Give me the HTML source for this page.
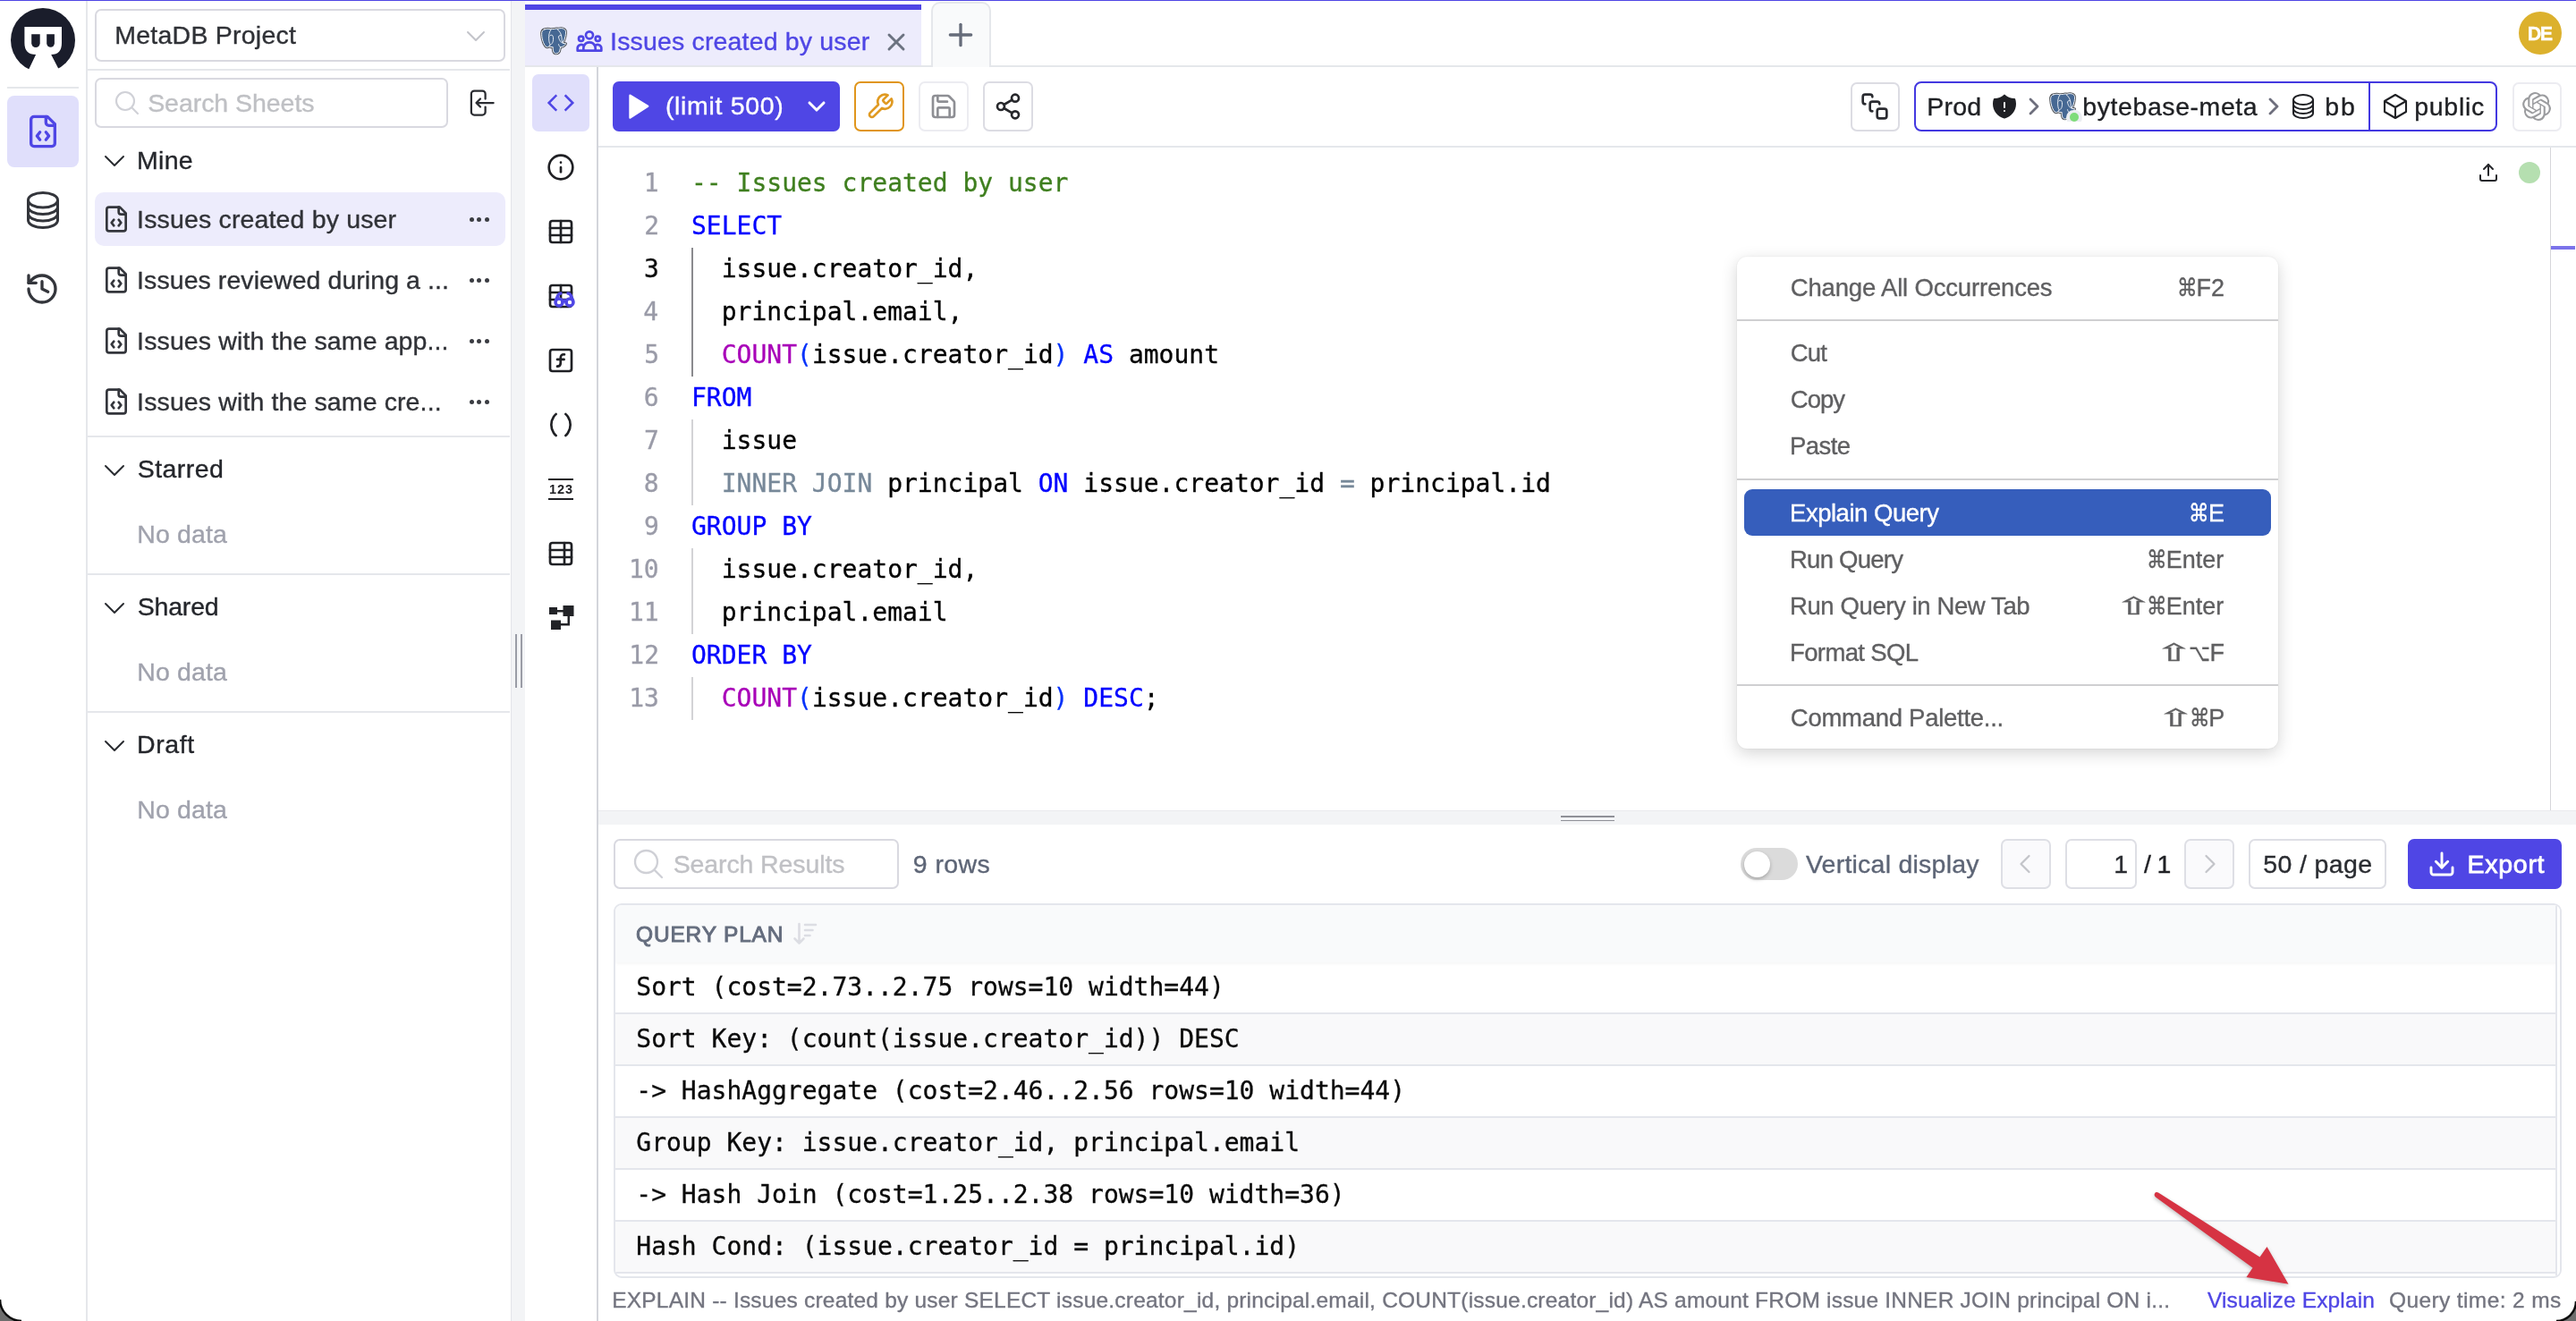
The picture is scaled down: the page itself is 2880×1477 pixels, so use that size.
<!DOCTYPE html>
<html lang="en">
<head>
<meta charset="utf-8">
<title>Bytebase SQL Editor - Issues created by user</title>
<style>
html,body{margin:0;padding:0;background:#fff;}
body{width:2880px;height:1477px;overflow:hidden;font-family:"Liberation Sans",sans-serif;}
#app{position:relative;width:2880px;height:1477px;overflow:hidden;will-change:transform;}
.b{position:absolute;box-sizing:border-box;}
.i{position:absolute;display:block;overflow:visible;}
.t{position:absolute;white-space:pre;font-family:"Liberation Sans","DejaVu Sans",sans-serif;-webkit-text-stroke:.35px;}
.m{font-family:"DejaVu Sans Mono","Liberation Mono",monospace;-webkit-text-stroke:.3px;}
.d{font-family:"DejaVu Sans","Liberation Sans",sans-serif;}
</style>
</head>
<body>
<div id="app">
<div class="b" style="left:0px;top:0px;width:2880px;height:1px;background:#4f46e5;"></div>
<nav aria-label="Primary">
<div class="b" style="left:96px;top:1px;width:2px;height:1476px;background:#e5e7eb;"></div>
<svg class="i" style="left:12px;top:9px" width="72" height="72" viewBox="0 0 72 72">
<circle cx="36" cy="36" r="36" fill="#1a1d2b"/>
<path d="M15.400 21H57V39Q57 52 45.200 52L54.500 70V74H19.500V70L28.100 52Q15.400 52 15.400 39Z" fill="#fff"/>
<path d="M23.200 29.200H32.700V39.300a4.750 4.750 0 0 1-9.500 0Z" fill="#1a1d2b"/>
<path d="M40.200 29.200H48.900V39.300a4.350 4.350 0 0 1-8.700 0Z" fill="#1a1d2b"/>
</svg>
<div class="b" style="left:8px;top:97px;width:80px;height:2px;background:#e5e7eb;"></div>
<div class="b" style="left:8px;top:107px;width:80px;height:80px;background:#e0dffb;border-radius:8px;"></div>
<svg class="i" style="left:28px;top:127px" width="40" height="40" viewBox="0 0 24 24" fill="none" stroke="#4f46e5" stroke-width="2" stroke-linecap="round" stroke-linejoin="round" ><path d="M10 12.5 8 15l2 2.5"/><path d="m14 12.5 2 2.5-2 2.5"/><path d="M14 2v4a2 2 0 0 0 2 2h4"/><path d="M15 2H6a2 2 0 0 0-2 2v16a2 2 0 0 0 2 2h12a2 2 0 0 0 2-2V7z"/></svg>
<svg class="i" style="left:24px;top:211px" width="48" height="48" viewBox="0 0 24 24" fill="none" stroke="#33353b" stroke-width="1.5" stroke-linecap="round" stroke-linejoin="round" ><path d="M20.250 6.375c0 2.278-3.694 4.125-8.250 4.125S3.750 8.653 3.750 6.375m16.500 0c0-2.278-3.694-4.125-8.250-4.125S3.750 4.097 3.750 6.375m16.500 0v11.250c0 2.278-3.694 4.125-8.250 4.125s-8.250-1.847-8.250-4.125V6.375m16.500 0v3.750m-16.500-3.750v3.750m16.500 0v3.750C20.250 16.153 16.556 18 12 18s-8.250-1.847-8.250-4.125v-3.750m16.500 0c0 2.278-3.694 4.125-8.250 4.125s-8.250-1.847-8.250-4.125"/></svg>
<svg class="i" style="left:27px;top:303px" width="40" height="40" viewBox="0 0 24 24" fill="none" stroke="#33353b" stroke-width="2" stroke-linecap="round" stroke-linejoin="round" ><path d="M3 12a9 9 0 1 0 9-9 9.75 9.75 0 0 0-6.74 2.74L3 8"/><path d="M3 3v5h5"/><path d="M12 7v5l4 2"/></svg>
</nav>
<aside aria-label="Sheets">
<div class="b" style="left:570.5px;top:1px;width:1.5px;height:1476px;background:#e3e4e9;"></div>
<div class="b" style="left:572px;top:1px;width:15px;height:1476px;background:#f3f4f6;"></div>
<div class="b" style="left:576px;top:709px;width:2px;height:60px;background:#9a9ca6;"></div>
<div class="b" style="left:582px;top:709px;width:2px;height:60px;background:#9a9ca6;"></div>
<div class="b" style="left:106px;top:9.5px;width:459px;height:59px;border:2px solid #d9d9e0;border-radius:7px;"></div>
<span class="t" style="left:128.30px;top:20.62px;font-size:28.5px;line-height:37px;letter-spacing:0.233px;color:#2f3136;">MetaDB Project</span>
<svg class="i" style="left:516px;top:23.500px" width="32" height="32" viewBox="0 0 16 16" fill="#c3c4ca"><path d="M3.146 5.646C3.342 5.451 3.658 5.451 3.854 5.646L8 9.793L12.146 5.646C12.342 5.451 12.658 5.451 12.854 5.646C13.049 5.842 13.049 6.158 12.854 6.354L8.354 10.854C8.158 11.049 7.842 11.049 7.646 10.854L3.146 6.354C2.951 6.158 2.951 5.842 3.146 5.646Z"/></svg>
<div class="b" style="left:98px;top:77px;width:472px;height:2px;background:#e5e7eb;"></div>
<div class="b" style="left:106px;top:87px;width:394.5px;height:55.5px;border:2px solid #d9d9e0;border-radius:7px;"></div>
<svg class="i" style="left:125.5px;top:99px" width="32" height="32" viewBox="0 0 24 24" fill="none" stroke="#d0d1d7" stroke-width="1.6" stroke-linecap="round" stroke-linejoin="round" ><path d="M21 21l-5.197-5.197m0 0A7.500 7.500 0 105.196 5.196a7.500 7.500 0 0010.607 10.607z"/></svg>
<span class="t" style="left:165.17px;top:96.62px;font-size:28.5px;line-height:37px;letter-spacing:-0.050px;color:#bfc0c4;">Search Sheets</span>
<svg class="i" style="left:518.5px;top:96.5px" width="36" height="36" viewBox="0 0 24 24" fill="none" stroke="#2a2c31" stroke-width="1.5" stroke-linecap="round" stroke-linejoin="round" ><path d="M15.750 9V5.250A2.250 2.250 0 0013.500 3h-6a2.250 2.250 0 00-2.250 2.250v13.500A2.250 2.250 0 007.500 21h6a2.250 2.250 0 002.250-2.250V15M12 9l-3 3m0 0l3 3m-3-3h12.750"/></svg>
<svg class="i" style="left:112px;top:164px" width="32" height="32" viewBox="0 0 24 24" fill="none" stroke="#2a2c31" stroke-width="1.5" stroke-linecap="round" stroke-linejoin="round" ><path d="M19.500 8.250l-7.500 7.500-7.500-7.500"/></svg>
<span class="t" style="left:152.93px;top:160.62px;font-size:28.5px;line-height:37px;letter-spacing:0.334px;color:#24262b;">Mine</span>
<div class="b" style="left:106px;top:215px;width:459px;height:60px;background:#edecfc;border-radius:10px;"></div>
<svg class="i" style="left:114px;top:229px" width="32" height="32" viewBox="0 0 24 24" fill="none" stroke="#33353b" stroke-width="2" stroke-linecap="round" stroke-linejoin="round" ><path d="M10 12.5 8 15l2 2.5"/><path d="m14 12.5 2 2.5-2 2.5"/><path d="M14 2v4a2 2 0 0 0 2 2h4"/><path d="M15 2H6a2 2 0 0 0-2 2v16a2 2 0 0 0 2 2h12a2 2 0 0 0 2-2V7z"/></svg>
<span class="t" style="left:153.11px;top:226.62px;font-size:28.5px;line-height:37px;letter-spacing:0.155px;color:#303237;">Issues created by user</span>
<div class="b" style="left:524.5px;top:242.5px;width:5px;height:5px;background:#3a3c42;border-radius:3px;"></div>
<div class="b" style="left:533.0px;top:242.5px;width:5px;height:5px;background:#3a3c42;border-radius:3px;"></div>
<div class="b" style="left:541.5px;top:242.5px;width:5px;height:5px;background:#3a3c42;border-radius:3px;"></div>
<svg class="i" style="left:114px;top:297px" width="32" height="32" viewBox="0 0 24 24" fill="none" stroke="#33353b" stroke-width="2" stroke-linecap="round" stroke-linejoin="round" ><path d="M10 12.5 8 15l2 2.5"/><path d="m14 12.5 2 2.5-2 2.5"/><path d="M14 2v4a2 2 0 0 0 2 2h4"/><path d="M15 2H6a2 2 0 0 0-2 2v16a2 2 0 0 0 2 2h12a2 2 0 0 0 2-2V7z"/></svg>
<span class="t" style="left:153.11px;top:294.62px;font-size:28.5px;line-height:37px;letter-spacing:0.068px;color:#303237;">Issues reviewed during a ...</span>
<div class="b" style="left:524.5px;top:310.5px;width:5px;height:5px;background:#3a3c42;border-radius:3px;"></div>
<div class="b" style="left:533.0px;top:310.5px;width:5px;height:5px;background:#3a3c42;border-radius:3px;"></div>
<div class="b" style="left:541.5px;top:310.5px;width:5px;height:5px;background:#3a3c42;border-radius:3px;"></div>
<svg class="i" style="left:114px;top:365px" width="32" height="32" viewBox="0 0 24 24" fill="none" stroke="#33353b" stroke-width="2" stroke-linecap="round" stroke-linejoin="round" ><path d="M10 12.5 8 15l2 2.5"/><path d="m14 12.5 2 2.5-2 2.5"/><path d="M14 2v4a2 2 0 0 0 2 2h4"/><path d="M15 2H6a2 2 0 0 0-2 2v16a2 2 0 0 0 2 2h12a2 2 0 0 0 2-2V7z"/></svg>
<span class="t" style="left:153.11px;top:362.62px;font-size:28.5px;line-height:37px;letter-spacing:0.119px;color:#303237;">Issues with the same app...</span>
<div class="b" style="left:524.5px;top:378.5px;width:5px;height:5px;background:#3a3c42;border-radius:3px;"></div>
<div class="b" style="left:533.0px;top:378.5px;width:5px;height:5px;background:#3a3c42;border-radius:3px;"></div>
<div class="b" style="left:541.5px;top:378.5px;width:5px;height:5px;background:#3a3c42;border-radius:3px;"></div>
<svg class="i" style="left:114px;top:433px" width="32" height="32" viewBox="0 0 24 24" fill="none" stroke="#33353b" stroke-width="2" stroke-linecap="round" stroke-linejoin="round" ><path d="M10 12.5 8 15l2 2.5"/><path d="m14 12.5 2 2.5-2 2.5"/><path d="M14 2v4a2 2 0 0 0 2 2h4"/><path d="M15 2H6a2 2 0 0 0-2 2v16a2 2 0 0 0 2 2h12a2 2 0 0 0 2-2V7z"/></svg>
<span class="t" style="left:153.11px;top:430.62px;font-size:28.5px;line-height:37px;letter-spacing:0.119px;color:#303237;">Issues with the same cre...</span>
<div class="b" style="left:524.5px;top:446.5px;width:5px;height:5px;background:#3a3c42;border-radius:3px;"></div>
<div class="b" style="left:533.0px;top:446.5px;width:5px;height:5px;background:#3a3c42;border-radius:3px;"></div>
<div class="b" style="left:541.5px;top:446.5px;width:5px;height:5px;background:#3a3c42;border-radius:3px;"></div>
<div class="b" style="left:98px;top:487px;width:472px;height:2px;background:#e5e7eb;"></div>
<svg class="i" style="left:112px;top:509.5px" width="32" height="32" viewBox="0 0 24 24" fill="none" stroke="#2a2c31" stroke-width="1.5" stroke-linecap="round" stroke-linejoin="round" ><path d="M19.500 8.250l-7.500 7.500-7.500-7.500"/></svg>
<span class="t" style="left:153.70px;top:506.12px;font-size:28.5px;line-height:37px;letter-spacing:0.469px;color:#24262b;">Starred</span>
<span class="t" style="left:153.30px;top:578.62px;font-size:28.5px;line-height:37px;letter-spacing:0.138px;color:#a0a2ad;">No data</span>
<div class="b" style="left:98px;top:641px;width:472px;height:2px;background:#e5e7eb;"></div>
<svg class="i" style="left:112px;top:663.5px" width="32" height="32" viewBox="0 0 24 24" fill="none" stroke="#2a2c31" stroke-width="1.5" stroke-linecap="round" stroke-linejoin="round" ><path d="M19.500 8.250l-7.500 7.500-7.500-7.500"/></svg>
<span class="t" style="left:153.70px;top:660.12px;font-size:28.5px;line-height:37px;letter-spacing:-0.180px;color:#24262b;">Shared</span>
<span class="t" style="left:153.30px;top:732.62px;font-size:28.5px;line-height:37px;letter-spacing:0.138px;color:#a0a2ad;">No data</span>
<div class="b" style="left:98px;top:795px;width:472px;height:2px;background:#e5e7eb;"></div>
<svg class="i" style="left:112px;top:817.5px" width="32" height="32" viewBox="0 0 24 24" fill="none" stroke="#2a2c31" stroke-width="1.5" stroke-linecap="round" stroke-linejoin="round" ><path d="M19.500 8.250l-7.500 7.500-7.500-7.500"/></svg>
<span class="t" style="left:152.93px;top:814.12px;font-size:28.5px;line-height:37px;letter-spacing:0.651px;color:#24262b;">Draft</span>
<span class="t" style="left:153.30px;top:886.62px;font-size:28.5px;line-height:37px;letter-spacing:0.138px;color:#a0a2ad;">No data</span>
</aside>
<header aria-label="Tabs">
<div class="b" style="left:587px;top:73px;width:2293px;height:2px;background:#e5e7eb;"></div>
<div class="b" style="left:587px;top:5px;width:443px;height:68px;background:#edecfc;"></div>
<div class="b" style="left:587px;top:5px;width:443px;height:6px;background:#4f46e5;"></div>
<span class="t" style="left:682.11px;top:27.62px;font-size:28.5px;line-height:37px;letter-spacing:0.160px;color:#4f46e5;">Issues created by user</span>
<svg class="i" style="left:642.7px;top:30px" width="32" height="32" viewBox="0 0 24 24" fill="none" stroke="#4f46e5" stroke-width="2" stroke-linecap="round" stroke-linejoin="round" ><path d="M17 20h5v-2a3 3 0 00-5.356-1.857M17 20H7m10 0v-2c0-.656-.126-1.283-.356-1.857M7 20H2v-2a3 3 0 015.356-1.857M7 20v-2c0-.656.126-1.283.356-1.857m0 0a5.002 5.002 0 019.288 0M15 7a3 3 0 11-6 0 3 3 0 016 0zm6 3a2 2 0 11-4 0 2 2 0 014 0zM7 10a2 2 0 11-4 0 2 2 0 014 0z"/></svg>
<svg class="i" style="left:986px;top:30.5px" width="32" height="32" viewBox="0 0 24 24" fill="none" stroke="#6b7280" stroke-width="2.2" stroke-linecap="round" stroke-linejoin="round" ><path d="M18 6 6 18"/><path d="m6 6 12 12"/></svg>
<div class="b" style="left:1041px;top:1.5px;width:67px;height:73.5px;background:#f9fafb;border:2px solid #e5e7eb;border-radius:10px;border-bottom:none;border-radius:10px 10px 0 0;"></div>
<svg class="i" style="left:1054px;top:19px" width="40" height="40" viewBox="0 0 24 24" fill="none" stroke="#666c7a" stroke-width="2" stroke-linecap="round" stroke-linejoin="round" ><path d="M5 12h14"/><path d="M12 5v14"/></svg>
<div class="b" style="left:2816px;top:13px;width:48px;height:48px;background:#dcb12d;border-radius:24px;"></div>
<span class="t" style="left:2825.79px;top:23.55px;font-size:21.5px;line-height:28px;font-weight:700;letter-spacing:-1.488px;color:#fff;">DE</span>
<svg class="i" style="left:599.9px;top:26px" width="40" height="40" viewBox="0 0 44 44" fill="none" stroke-linecap="round" stroke-linejoin="round">
<path d="M10 7.400C7 8 6 10.500 6.200 13.500C6.300 17 7 20.500 8.200 23.500C9.200 26 10.600 28.600 12.300 29.300C13.500 29.600 14.500 29 15.300 28.400C16.500 29.200 18.500 29.500 20 29.200C20 31 20 32.500 20.400 34C20.900 36 22 37.300 23.600 37.300C26 37.300 27.700 36 28.200 34C28.700 32.300 29 30.500 29.300 29.200C31 29.300 32.700 28.600 34 27.400C35 26.500 35.800 25.500 35.800 25C35 24.600 33.500 25 32 24.400C33.500 22 34.600 19 35.200 16C35.800 13 36 11 35.600 9.500C35 7.500 33 6.400 30.500 6.200C29 6.100 27.500 6.400 26.300 6.900C24.800 6.500 23.200 6.500 21.700 7.200C20.200 6.900 18.700 7 17.300 7.500C15 6.600 12 6.800 10 7.400Z" stroke="#4f5358" stroke-width="3.200"/>
<path d="M10 7.400C7 8 6 10.500 6.200 13.500C6.300 17 7 20.500 8.200 23.500C9.200 26 10.600 28.600 12.300 29.300C13.500 29.600 14.500 29 15.300 28.400C16.500 29.200 18.500 29.500 20 29.200C20 31 20 32.500 20.400 34C20.900 36 22 37.300 23.600 37.300C26 37.300 27.700 36 28.200 34C28.700 32.300 29 30.500 29.300 29.200C31 29.300 32.700 28.600 34 27.400C35 26.500 35.800 25.500 35.800 25C35 24.600 33.500 25 32 24.400C33.500 22 34.600 19 35.200 16C35.800 13 36 11 35.600 9.500C35 7.500 33 6.400 30.500 6.200C29 6.100 27.500 6.400 26.300 6.900C24.800 6.500 23.200 6.500 21.700 7.200C20.200 6.900 18.700 7 17.300 7.500C15 6.600 12 6.800 10 7.400Z" fill="#466893" stroke="#f3f6fb" stroke-width="1.100"/>
<path d="M17.300 8C15.400 11 14.800 15 15 19C15.100 22 15.600 24.500 16.500 26C16.200 27.200 15.800 28 15.300 28.400M16 15.600C17 14 19 14.200 19.800 15.500C20.600 17.200 20.600 20 20 22.500C19.600 24.200 18.500 25.600 17 26.500M25.500 7.600C28.500 9.500 30.500 13.500 30.800 18C31 21 31.400 23.300 32 24.400M27 16.600C27.500 15 29 14.300 30.200 15M27 16.600C27 19 28.500 22 30.600 23.800M29.300 29.200C28 28.800 27 27.600 27 26" stroke="#f3f6fb" stroke-width="1"/>
</svg>
</header>
<div role="tablist" aria-label="Panels">
<div class="b" style="left:667px;top:75px;width:2px;height:1402px;background:#d3d5db;"></div>
<div class="b" style="left:595px;top:83px;width:64px;height:64px;background:#e0dffb;border-radius:7px;"></div>
<svg class="i" style="left:611px;top:99px" width="32" height="32" viewBox="611 99 32 32" fill="none" stroke="#4f46e5" stroke-width="2.500" stroke-linecap="square" stroke-linejoin="miter"><path d="M621.400 107.200L613.600 115L621.400 122.800M632.500 107.200L640.300 115L632.500 122.800"/></svg>
<svg class="i" style="left:611px;top:171px" width="32" height="32" viewBox="0 0 24 24" fill="none" stroke="#1f2024" stroke-width="2" stroke-linecap="round" stroke-linejoin="round" ><circle cx="12" cy="12" r="10"/><path d="M12 16v-4"/><path d="M12 8h.01"/></svg>
<svg class="i" style="left:611px;top:243px" width="32" height="32" viewBox="0 0 24 24" fill="none" stroke="#1f2024" stroke-width="2" stroke-linecap="round" stroke-linejoin="round" ><path d="M12 3v18"/><rect width="18" height="18" x="3" y="3" rx="2"/><path d="M3 9h18"/><path d="M3 15h18"/></svg>
<svg class="i" style="left:611.3px;top:314.8px" width="32" height="32" viewBox="0 0 24 24" fill="none" stroke="#1f2024" stroke-width="2" stroke-linecap="round" stroke-linejoin="round" ><path d="M12 3v18"/><rect width="18" height="18" x="3" y="3" rx="2"/><path d="M3 9h18"/><path d="M3 15h18"/></svg>
<svg class="i" style="left:619.200px;top:323px" width="24" height="24" viewBox="0 0 24 24" fill="none" stroke="#4f46e5" stroke-width="3.500" stroke-linecap="round" stroke-linejoin="round"><circle cx="6" cy="15" r="4" fill="#fff"/><circle cx="18" cy="15" r="4" fill="#fff"/><path d="m14 15a2 2 0 0 0-4 0"/><path d="M2.500 13 5 7c.700-1.300 1.400-2 3-2"/><path d="M21.500 13 19 7c-.700-1.300-1.500-2-3-2"/></svg>
<svg class="i" style="left:611px;top:387px" width="32" height="32" viewBox="0 0 24 24" fill="none" stroke="#1f2024" stroke-width="2" stroke-linecap="round" stroke-linejoin="round" ><rect width="18" height="18" x="3" y="3" rx="2" ry="2"/><path d="M9 17c2 0 2.800-1 2.800-2.800V10c0-2 1-3.300 3.200-3"/><path d="M9 11.200h5.700"/></svg>
<svg class="i" style="left:611px;top:459px" width="32" height="32" viewBox="0 0 24 24" fill="none" stroke="#1f2024" stroke-width="2" stroke-linecap="round" stroke-linejoin="round" ><path d="M8 21s-4-3-4-9 4-9 4-9"/><path d="M16 3s4 3 4 9-4 9-4 9"/></svg>
<div class="b" style="left:613px;top:535.3px;width:28px;height:2px;background:#1f2024;"></div>
<div class="b" style="left:613px;top:557px;width:28px;height:2px;background:#1f2024;"></div>
<span class="t" style="left:614.08px;top:538.48px;font-size:14.5px;line-height:19px;font-weight:700;letter-spacing:0.860px;color:#1f2024;-webkit-text-stroke:0;">123</span>
<svg class="i" style="left:611px;top:603px" width="32" height="32" viewBox="0 0 24 24" fill="none" stroke="#1f2024" stroke-width="2" stroke-linecap="round" stroke-linejoin="round" ><path d="M15 3v18"/><rect width="18" height="18" x="3" y="3" rx="2"/><path d="M21 9H3"/><path d="M21 15H3"/></svg>
<svg class="i" style="left:613px;top:676px" width="30" height="30" viewBox="0 0 30 30" fill="#222327"><rect x="1" y="3" width="9" height="8"/><rect x="16.500" y="1" width="12" height="12"/><rect x="3" y="17.500" width="11" height="10.500"/><path d="M10 6h7v2.500h-7zM21.500 13h2.500v10.500h-10v-2.500h7.500z"/></svg>
</div>
<div role="toolbar" aria-label="Editor toolbar">
<div class="b" style="left:669px;top:163px;width:2211px;height:2px;background:#e5e7eb;"></div>
<div class="b" style="left:685px;top:91px;width:254px;height:56px;background:#4f46e5;border-radius:7px;"></div>
<svg class="i" style="left:702px;top:104px" width="26" height="30" viewBox="0 0 26 30"><path d="M2.500 2.800L22.200 14.800L2.500 27.500Z" fill="#fff" stroke="#fff" stroke-width="2.400" stroke-linejoin="round"/></svg>
<span class="t" style="left:743.97px;top:100.12px;font-size:28.5px;line-height:37px;letter-spacing:0.657px;color:#fff;">(limit 500)</span>
<svg class="i" style="left:897px;top:102.5px" width="32" height="32" viewBox="0 0 24 24" fill="none" stroke="#fff" stroke-width="2.3" stroke-linecap="round" stroke-linejoin="round" ><path d="m6 9 6 6 6-6"/></svg>
<div class="b" style="left:955px;top:91px;width:56px;height:56px;border:2px solid #e0951c;border-radius:7px;"></div>
<svg class="i" style="left:968px;top:102.5px" width="32" height="32" viewBox="0 0 24 24" fill="none" stroke="#e09a22" stroke-width="2" stroke-linecap="round" stroke-linejoin="round" ><path d="M14.700 6.300a1 1 0 0 0 0 1.400l1.600 1.600a1 1 0 0 0 1.400 0l3.770-3.770a6 6 0 0 1-7.940 7.940l-6.910 6.910a2.120 2.120 0 0 1-3-3l6.910-6.910a6 6 0 0 1 7.940-7.940l-3.760 3.760z"/></svg>
<div class="b" style="left:1027px;top:91px;width:56px;height:56px;border:2px solid #ececf1;border-radius:7px;"></div>
<svg class="i" style="left:1039px;top:103px" width="32" height="32" viewBox="0 0 24 24" fill="none" stroke="#8e8f94" stroke-width="2" stroke-linecap="round" stroke-linejoin="round" ><path d="M15.200 3a2 2 0 0 1 1.400.600l3.800 3.800a2 2 0 0 1 .600 1.400V19a2 2 0 0 1-2 2H5a2 2 0 0 1-2-2V5a2 2 0 0 1 2-2z"/><path d="M17 21v-7a1 1 0 0 0-1-1H8a1 1 0 0 0-1 1v7"/><path d="M7 3v4a1 1 0 0 0 1 1h7"/></svg>
<div class="b" style="left:1099px;top:91px;width:56px;height:56px;border:2px solid #dcdce3;border-radius:7px;"></div>
<svg class="i" style="left:1111px;top:103px" width="32" height="32" viewBox="0 0 24 24" fill="none" stroke="#27282c" stroke-width="2" stroke-linecap="round" stroke-linejoin="round" ><circle cx="18" cy="5" r="3"/><circle cx="6" cy="12" r="3"/><circle cx="18" cy="19" r="3"/><line x1="8.590" x2="15.420" y1="13.510" y2="17.490"/><line x1="15.410" x2="8.590" y1="6.510" y2="10.490"/></svg>
<div class="b" style="left:2068.5px;top:91.5px;width:55px;height:55px;border:2px solid #dcdce3;border-radius:7px;"></div>
<svg class="i" style="left:2080px;top:102.5px" width="32" height="32" viewBox="0 0 24 24" fill="none" stroke="#2a2b30" stroke-width="2" stroke-linecap="round" stroke-linejoin="round" ><path d="M4 10c-1.100 0-2-.900-2-2V4c0-1.100.900-2 2-2h4c1.100 0 2 .900 2 2"/><path d="M10 16c-1.100 0-2-.900-2-2v-4c0-1.100.900-2 2-2h4c1.100 0 2 .900 2 2"/><rect width="8" height="8" x="14" y="14" rx="2"/></svg>
<div class="b" style="left:2140px;top:91px;width:652px;height:56px;border:2px solid #4338e0;border-radius:8px;"></div>
<div class="b" style="left:2648px;top:91px;width:2px;height:56px;background:#4338e0;"></div>
<span class="t" style="left:2154.30px;top:100.62px;font-size:28.5px;line-height:37px;letter-spacing:0.230px;color:#1f2024;">Prod</span>
<svg class="i" style="left:2224.500px;top:102.500px" width="32" height="32" viewBox="0 0 24 24" fill="#1f2024"><path fill-rule="evenodd" clip-rule="evenodd" d="M11.484 2.170a.750.750 0 011.032 0 11.209 11.209 0 007.877 3.080.750.750 0 01.722.515 12.740 12.740 0 01.635 3.985c0 5.942-4.064 10.933-9.563 12.348a.749.749 0 01-.374 0C6.314 20.683 2.250 15.692 2.250 9.750c0-1.390.223-2.730.635-3.985a.750.750 0 01.722-.516l.143.001c2.996 0 5.718-1.170 7.734-3.080zM12 8.250a.750.750 0 01.750.750v3.750a.750.750 0 01-1.500 0V9a.750.750 0 01.750-.750zM12 15a.750.750 0 00-.750.750v.008c0 .414.336.750.750.750h.008a.750.750 0 00.750-.750v-.008a.750.750 0 00-.750-.750H12z"/></svg>
<svg class="i" style="left:2258px;top:103px" width="32" height="32" viewBox="0 0 24 24" fill="none" stroke="#6e6f7d" stroke-width="2.1" stroke-linecap="round" stroke-linejoin="round" ><path d="m9 18 6-6-6-6"/></svg>
<svg class="i" style="left:2286.85px;top:99px" width="40" height="40" viewBox="0 0 44 44" fill="none" stroke-linecap="round" stroke-linejoin="round">
<path d="M10 7.400C7 8 6 10.500 6.200 13.500C6.300 17 7 20.500 8.200 23.500C9.200 26 10.600 28.600 12.300 29.300C13.500 29.600 14.500 29 15.300 28.400C16.500 29.200 18.500 29.500 20 29.200C20 31 20 32.500 20.400 34C20.900 36 22 37.300 23.600 37.300C26 37.300 27.700 36 28.200 34C28.700 32.300 29 30.500 29.300 29.200C31 29.300 32.700 28.600 34 27.400C35 26.500 35.800 25.500 35.800 25C35 24.600 33.500 25 32 24.400C33.500 22 34.600 19 35.200 16C35.800 13 36 11 35.600 9.500C35 7.500 33 6.400 30.500 6.200C29 6.100 27.500 6.400 26.300 6.900C24.800 6.500 23.200 6.500 21.700 7.200C20.200 6.900 18.700 7 17.300 7.500C15 6.600 12 6.800 10 7.400Z" stroke="#4f5358" stroke-width="3.200"/>
<path d="M10 7.400C7 8 6 10.500 6.200 13.500C6.300 17 7 20.500 8.200 23.500C9.200 26 10.600 28.600 12.300 29.300C13.500 29.600 14.500 29 15.300 28.400C16.500 29.200 18.500 29.500 20 29.200C20 31 20 32.500 20.400 34C20.900 36 22 37.300 23.600 37.300C26 37.300 27.700 36 28.200 34C28.700 32.300 29 30.500 29.300 29.200C31 29.300 32.700 28.600 34 27.400C35 26.500 35.800 25.500 35.800 25C35 24.600 33.500 25 32 24.400C33.500 22 34.600 19 35.200 16C35.800 13 36 11 35.600 9.500C35 7.500 33 6.400 30.500 6.200C29 6.100 27.500 6.400 26.300 6.900C24.800 6.500 23.200 6.500 21.700 7.200C20.200 6.900 18.700 7 17.300 7.500C15 6.600 12 6.800 10 7.400Z" fill="#466893" stroke="#f3f6fb" stroke-width="1.100"/>
<path d="M17.300 8C15.400 11 14.800 15 15 19C15.100 22 15.600 24.500 16.500 26C16.200 27.200 15.800 28 15.300 28.400M16 15.600C17 14 19 14.200 19.800 15.500C20.600 17.200 20.600 20 20 22.500C19.600 24.200 18.500 25.600 17 26.500M25.500 7.600C28.500 9.500 30.500 13.500 30.800 18C31 21 31.400 23.300 32 24.400M27 16.600C27.500 15 29 14.300 30.200 15M27 16.600C27 19 28.500 22 30.600 23.800M29.300 29.200C28 28.800 27 27.600 27 26" stroke="#f3f6fb" stroke-width="1"/>
</svg>
<div class="b" style="left:2308px;top:120px;width:24px;height:15.700px;overflow:hidden"><div class="b" style="left:2px;top:2.500px;width:17.600px;height:17.600px;border-radius:9px;background:#eceef2"></div><div class="b" style="left:5.600px;top:6.100px;width:10.400px;height:10.400px;border-radius:6px;background:#7fdc7a"></div></div>
<span class="t" style="left:2328.29px;top:100.62px;font-size:28.5px;line-height:37px;letter-spacing:0.575px;color:#1f2024;">bytebase-meta</span>
<svg class="i" style="left:2526px;top:103px" width="32" height="32" viewBox="0 0 24 24" fill="none" stroke="#6e6f7d" stroke-width="2.1" stroke-linecap="round" stroke-linejoin="round" ><path d="m9 18 6-6-6-6"/></svg>
<svg class="i" style="left:2559px;top:102.5px" width="32" height="32" viewBox="0 0 24 24" fill="none" stroke="#1f2024" stroke-width="1.5" stroke-linecap="round" stroke-linejoin="round" ><path d="M20.250 6.375c0 2.278-3.694 4.125-8.250 4.125S3.750 8.653 3.750 6.375m16.500 0c0-2.278-3.694-4.125-8.250-4.125S3.750 4.097 3.750 6.375m16.500 0v11.250c0 2.278-3.694 4.125-8.250 4.125s-8.250-1.847-8.250-4.125V6.375m16.500 0v3.750m-16.500-3.750v3.750m16.500 0v3.750C20.250 16.153 16.556 18 12 18s-8.250-1.847-8.250-4.125v-3.750m16.500 0c0 2.278-3.694 4.125-8.250 4.125s-8.250-1.847-8.250-4.125"/></svg>
<span class="t" style="left:2599.29px;top:100.62px;font-size:28.5px;line-height:37px;letter-spacing:1.818px;color:#1f2024;">bb</span>
<svg class="i" style="left:2662px;top:102.5px" width="32" height="32" viewBox="0 0 24 24" fill="none" stroke="#1f2024" stroke-width="1.6" stroke-linecap="round" stroke-linejoin="round" ><path d="M21 7.500l-9-5.250L3 7.500m18 0l-9 5.250m9-5.250v9l-9 5.250M3 7.500l9 5.250M3 7.500v9l9 5.250m0-9v9"/></svg>
<span class="t" style="left:2699.29px;top:100.62px;font-size:28.5px;line-height:37px;letter-spacing:0.683px;color:#1f2024;">public</span>
<div class="b" style="left:2809px;top:91.5px;width:55px;height:55px;border:2px solid #ececf1;border-radius:7px;"></div>
<svg class="i" style="left:2820px;top:103px" width="32" height="32" viewBox="0 0 24 24" fill="#9b9c9f"><path d="M22.282 9.821a5.985 5.985 0 0 0-.516-4.910 6.046 6.046 0 0 0-6.510-2.900A6.065 6.065 0 0 0 4.981 4.180a5.985 5.985 0 0 0-3.998 2.900 6.046 6.046 0 0 0 .743 7.097 5.980 5.980 0 0 0 .510 4.911 6.051 6.051 0 0 0 6.515 2.900A5.985 5.985 0 0 0 13.260 24a6.056 6.056 0 0 0 5.772-4.206 5.990 5.990 0 0 0 3.997-2.900 6.056 6.056 0 0 0-.747-7.073zM13.260 22.430a4.476 4.476 0 0 1-2.876-1.040l.141-.081 4.779-2.758a.795.795 0 0 0 .392-.681v-6.737l2.020 1.168a.071.071 0 0 1 .038.052v5.583a4.504 4.504 0 0 1-4.494 4.494zM3.600 18.304a4.470 4.470 0 0 1-.535-3.014l.142.085 4.783 2.759a.771.771 0 0 0 .780 0l5.843-3.369v2.332a.080.080 0 0 1-.033.062L9.740 19.950a4.500 4.500 0 0 1-6.140-1.646zM2.340 7.896a4.485 4.485 0 0 1 2.366-1.973V11.600a.766.766 0 0 0 .388.676l5.815 3.355-2.020 1.168a.076.076 0 0 1-.071 0l-4.830-2.786A4.504 4.504 0 0 1 2.340 7.872zm16.597 3.855l-5.833-3.387L15.119 7.200a.076.076 0 0 1 .071 0l4.830 2.791a4.494 4.494 0 0 1-.676 8.105v-5.678a.790.790 0 0 0-.407-.667zm2.010-3.023l-.141-.085-4.774-2.782a.776.776 0 0 0-.785 0L9.409 9.230V6.897a.066.066 0 0 1 .028-.061l4.830-2.787a4.500 4.500 0 0 1 6.680 4.660zm-12.640 4.135l-2.020-1.164a.080.080 0 0 1-.038-.057V6.075a4.500 4.500 0 0 1 7.375-3.453l-.142.080L8.704 5.460a.795.795 0 0 0-.393.681zm1.097-2.365l2.602-1.500 2.607 1.500v2.999l-2.597 1.500-2.607-1.500z"/></svg>
</div>
<section aria-label="SQL editor">
<div class="b" style="left:2851px;top:165px;width:1px;height:741px;background:#d6d6da;"></div>
<div class="b" style="left:2852px;top:275px;width:27px;height:4px;background:#7b73ea;"></div>
<svg class="i" style="left:2770px;top:181px" width="24" height="24" viewBox="0 0 24 24" fill="none" stroke="#27282c" stroke-width="2" stroke-linecap="round" stroke-linejoin="round" ><path d="M21 15v4a2 2 0 0 1-2 2H5a2 2 0 0 1-2-2v-4"/><polyline points="17 8 12 3 7 8"/><line x1="12" x2="12" y1="3" y2="15"/></svg>
<div class="b" style="left:2816px;top:181px;width:24px;height:24px;background:#b5dfb0;border-radius:12px;"></div>
<span class="t m" style="right:2143.32px;top:186.91px;font-size:28px;line-height:36px;color:#9a9ba8;">1</span>
<span class="t m" style="left:773.00px;top:186.91px;font-size:28px;line-height:36px;color:#000000;"><span style="color:#3f7f1f">-- Issues created by user</span></span>
<span class="t m" style="right:2142.97px;top:234.91px;font-size:28px;line-height:36px;color:#9a9ba8;">2</span>
<span class="t m" style="left:773.00px;top:234.91px;font-size:28px;line-height:36px;color:#000000;"><span style="color:#0000ff">SELECT</span></span>
<span class="t m" style="right:2143.09px;top:282.91px;font-size:28px;line-height:36px;color:#0b0b0b;">3</span>
<span class="t m" style="left:773.00px;top:282.91px;font-size:28px;line-height:36px;color:#000000;">  issue.creator_id,</span>
<span class="t m" style="right:2144.00px;top:330.91px;font-size:28px;line-height:36px;color:#9a9ba8;">4</span>
<span class="t m" style="left:773.00px;top:330.91px;font-size:28px;line-height:36px;color:#000000;">  principal.email,</span>
<span class="t m" style="right:2142.98px;top:378.91px;font-size:28px;line-height:36px;color:#9a9ba8;">5</span>
<span class="t m" style="left:773.00px;top:378.91px;font-size:28px;line-height:36px;color:#000000;">  <span style="color:#a800b8">COUNT</span><span style="color:#0431fa">(</span>issue.creator_id<span style="color:#0431fa">)</span> <span style="color:#0000ff">AS</span> amount</span>
<span class="t m" style="right:2143.29px;top:426.91px;font-size:28px;line-height:36px;color:#9a9ba8;">6</span>
<span class="t m" style="left:773.00px;top:426.91px;font-size:28px;line-height:36px;color:#000000;"><span style="color:#0000ff">FROM</span></span>
<span class="t m" style="right:2143.18px;top:474.91px;font-size:28px;line-height:36px;color:#9a9ba8;">7</span>
<span class="t m" style="left:773.00px;top:474.91px;font-size:28px;line-height:36px;color:#000000;">  issue</span>
<span class="t m" style="right:2143.31px;top:522.91px;font-size:28px;line-height:36px;color:#9a9ba8;">8</span>
<span class="t m" style="left:773.00px;top:522.91px;font-size:28px;line-height:36px;color:#000000;">  <span style="color:#778899">INNER JOIN</span> principal <span style="color:#0000ff">ON</span> issue.creator_id <span style="color:#778899">=</span> principal.id</span>
<span class="t m" style="right:2143.25px;top:570.91px;font-size:28px;line-height:36px;color:#9a9ba8;">9</span>
<span class="t m" style="left:773.00px;top:570.91px;font-size:28px;line-height:36px;color:#000000;"><span style="color:#0000ff">GROUP BY</span></span>
<span class="t m" style="right:2143.31px;top:618.91px;font-size:28px;line-height:36px;color:#9a9ba8;">10</span>
<span class="t m" style="left:773.00px;top:618.91px;font-size:28px;line-height:36px;color:#000000;">  issue.creator_id,</span>
<span class="t m" style="right:2143.32px;top:666.91px;font-size:28px;line-height:36px;color:#9a9ba8;">11</span>
<span class="t m" style="left:773.00px;top:666.91px;font-size:28px;line-height:36px;color:#000000;">  principal.email</span>
<span class="t m" style="right:2142.97px;top:714.91px;font-size:28px;line-height:36px;color:#9a9ba8;">12</span>
<span class="t m" style="left:773.00px;top:714.91px;font-size:28px;line-height:36px;color:#000000;"><span style="color:#0000ff">ORDER BY</span></span>
<span class="t m" style="right:2143.09px;top:762.91px;font-size:28px;line-height:36px;color:#9a9ba8;">13</span>
<span class="t m" style="left:773.00px;top:762.91px;font-size:28px;line-height:36px;color:#000000;">  <span style="color:#a800b8">COUNT</span><span style="color:#0431fa">(</span>issue.creator_id<span style="color:#0431fa">)</span> <span style="color:#0000ff">DESC</span>;</span>
<div class="b" style="left:773px;top:277px;width:2px;height:144px;background:#8a8a8e;"></div>
<div class="b" style="left:773px;top:469px;width:2px;height:96px;background:#d3d3d6;"></div>
<div class="b" style="left:773px;top:613px;width:2px;height:96px;background:#d3d3d6;"></div>
<div class="b" style="left:773px;top:757px;width:2px;height:48px;background:#d3d3d6;"></div>
<div class="b" style="left:669px;top:906px;width:2211px;height:16px;background:#f3f4f6;border-top:1px solid #e9eaee;"></div>
<div class="b" style="left:1745px;top:912px;width:60px;height:1.5px;background:#8f9097;"></div>
<div class="b" style="left:1745px;top:916.5px;width:60px;height:1.5px;background:#8f9097;"></div>
</section>
<div role="menu" aria-label="Editor context menu">
<div class="b" style="left:1942px;top:287px;width:605px;height:549.5px;background:#fff;border-radius:11px;box-shadow:0 5px 18px rgba(0,0,0,.17),0 0 2px rgba(0,0,0,.10);"></div>
<span class="t" style="left:2001.81px;top:304.37px;font-size:27.5px;line-height:36px;letter-spacing:-0.179px;color:#5f5f61;">Change All Occurrences</span>
<span class="t" style="right:392.93px;top:305.04px;font-size:27px;line-height:35px;color:#5f5f61;"><span style="display:inline-block;width:23.5px;transform:scaleX(0.84);transform-origin:50% 50%;text-align:center">⌘</span>F2</span>
<div class="b" style="left:1942px;top:356.5px;width:605px;height:2px;background:#cfcfd1;"></div>
<span class="t" style="left:2001.81px;top:377.37px;font-size:27.5px;line-height:36px;letter-spacing:-0.888px;color:#5f5f61;">Cut</span>
<span class="t" style="left:2001.81px;top:429.37px;font-size:27.5px;line-height:36px;letter-spacing:-1.012px;color:#5f5f61;">Copy</span>
<span class="t" style="left:2001.02px;top:481.37px;font-size:27.5px;line-height:36px;letter-spacing:-0.567px;color:#5f5f61;">Paste</span>
<div class="b" style="left:1942px;top:535px;width:605px;height:2px;background:#cfcfd1;"></div>
<div class="b" style="left:1950px;top:547px;width:589px;height:52px;background:#365ebc;border-radius:9px;"></div>
<span class="t" style="left:2001.02px;top:555.87px;font-size:27.5px;line-height:36px;letter-spacing:-0.477px;color:#fff;">Explain Query</span>
<span class="t" style="right:393.09px;top:556.54px;font-size:27px;line-height:35px;color:#fff;"><span style="display:inline-block;width:23.5px;transform:scaleX(0.84);transform-origin:50% 50%;text-align:center">⌘</span>E</span>
<span class="t" style="left:2001.02px;top:607.87px;font-size:27.5px;line-height:36px;letter-spacing:-0.758px;color:#5f5f61;">Run Query</span>
<span class="t" style="right:393.75px;top:608.54px;font-size:27px;line-height:35px;color:#5f5f61;"><span style="display:inline-block;width:23.5px;transform:scaleX(0.84);transform-origin:50% 50%;text-align:center">⌘</span>Enter</span>
<span class="t" style="left:2001.02px;top:659.87px;font-size:27.5px;line-height:36px;letter-spacing:-0.399px;color:#5f5f61;">Run Query in New Tab</span>
<span class="t" style="right:393.75px;top:660.54px;font-size:27px;line-height:35px;color:#5f5f61;"><span style="display:inline-block;width:25.5px;transform:scaleX(1.9);transform-origin:50% 50%;text-align:center">⇧</span><span style="display:inline-block;width:23.5px;transform:scaleX(0.84);transform-origin:50% 50%;text-align:center">⌘</span>Enter</span>
<span class="t" style="left:2001.02px;top:711.87px;font-size:27.5px;line-height:36px;letter-spacing:-0.626px;color:#5f5f61;">Format SQL</span>
<span class="t" style="right:393.14px;top:712.54px;font-size:27px;line-height:35px;color:#5f5f61;"><span style="display:inline-block;width:25.5px;transform:scaleX(1.9);transform-origin:50% 50%;text-align:center">⇧</span><span style="display:inline-block;width:26.5px;transform:scaleX(0.76);transform-origin:50% 50%;text-align:center">⌥</span>F</span>
<div class="b" style="left:1942px;top:764.5px;width:605px;height:2px;background:#cfcfd1;"></div>
<span class="t" style="left:2001.81px;top:785.37px;font-size:27.5px;line-height:36px;letter-spacing:-0.276px;color:#5f5f61;">Command Palette...</span>
<span class="t" style="right:392.71px;top:786.04px;font-size:27px;line-height:35px;color:#5f5f61;"><span style="display:inline-block;width:25.5px;transform:scaleX(1.9);transform-origin:50% 50%;text-align:center">⇧</span><span style="display:inline-block;width:23.5px;transform:scaleX(0.84);transform-origin:50% 50%;text-align:center">⌘</span>P</span>
</div>
<section aria-label="Query results">
<div class="b" style="left:685.5px;top:938px;width:319px;height:55.5px;border:2px solid #d9d9e0;border-radius:7px;"></div>
<svg class="i" style="left:705px;top:946px" width="40" height="40" viewBox="0 0 24 24" fill="none" stroke="#cfd0d6" stroke-width="1.4" stroke-linecap="round" stroke-linejoin="round" ><path d="M21 21l-5.197-5.197m0 0A7.500 7.500 0 105.196 5.196a7.500 7.500 0 0010.607 10.607z"/></svg>
<span class="t" style="left:752.70px;top:947.62px;font-size:28.5px;line-height:37px;letter-spacing:-0.114px;color:#c0c1c5;">Search Results</span>
<span class="t" style="left:1020.80px;top:947.62px;font-size:28.5px;line-height:37px;letter-spacing:0.416px;color:#5d6576;">9 rows</span>
<div class="b" style="left:1946px;top:948px;width:64px;height:36px;background:#dbdbdb;border-radius:18px;"></div>
<div class="b" style="left:1949.5px;top:951.5px;width:29px;height:29px;background:#fff;border-radius:15px;box-shadow:0 2px 4px rgba(0,0,0,.25);"></div>
<span class="t" style="left:2018.92px;top:947.62px;font-size:28.5px;line-height:37px;letter-spacing:0.238px;color:#5d6576;">Vertical display</span>
<div class="b" style="left:2237px;top:938px;width:55.5px;height:55.5px;background:#fafafc;border:2px solid #dedfe5;border-radius:7px;"></div>
<svg class="i" style="left:2245.5px;top:948px" width="36" height="36" viewBox="0 0 24 24" fill="none" stroke="#c3c4c9" stroke-width="1.5" stroke-linecap="round" stroke-linejoin="round" ><path d="m15 18-6-6 6-6"/></svg>
<div class="b" style="left:2309px;top:938px;width:79.5px;height:55.5px;border:2px solid #dedfe5;border-radius:7px;"></div>
<span class="t" style="right:500.98px;top:947.62px;font-size:28.5px;line-height:37px;color:#2a2c31;">1</span>
<span class="t" style="left:2397.11px;top:947.62px;font-size:28.5px;line-height:37px;letter-spacing:-0.722px;color:#1f2024;">/ 1</span>
<div class="b" style="left:2442px;top:938px;width:55.5px;height:55.5px;background:#fafafc;border:2px solid #dedfe5;border-radius:7px;"></div>
<svg class="i" style="left:2453px;top:948px" width="36" height="36" viewBox="0 0 24 24" fill="none" stroke="#c3c4c9" stroke-width="1.5" stroke-linecap="round" stroke-linejoin="round" ><path d="m9 18 6-6-6-6"/></svg>
<div class="b" style="left:2513.5px;top:938px;width:154px;height:55.5px;border:2px solid #dedfe5;border-radius:7px;"></div>
<span class="t" style="left:2530.28px;top:947.62px;font-size:28.5px;line-height:37px;letter-spacing:0.372px;color:#2a2c31;">50 / page</span>
<div class="b" style="left:2692px;top:938px;width:172px;height:55.5px;background:#4f46e5;border-radius:7px;"></div>
<svg class="i" style="left:2714px;top:949.5px" width="32" height="32" viewBox="0 0 24 24" fill="none" stroke="#fff" stroke-width="2.2" stroke-linecap="round" stroke-linejoin="round" ><path d="M21 15v4a2 2 0 0 1-2 2H5a2 2 0 0 1-2-2v-4"/><polyline points="7 10 12 15 17 10"/><line x1="12" x2="12" y1="15" y2="3"/></svg>
<span class="t" style="left:2758.50px;top:947.62px;font-size:28.5px;line-height:37px;letter-spacing:0.730px;color:#fff;-webkit-text-stroke:.8px #fff;">Export</span>
<div class="b" style="left:685.5px;top:1010px;width:2178px;height:419px;border:2px solid #e4e6ec;border-radius:9px;overflow:hidden;background:#fff;"><div class="b" style="left:0;top:0;width:2178px;height:64px;background:#f9fafb;box-shadow:0 1px 4px rgba(0,0,0,.05);"></div><div class="b" style="left:0;top:122px;width:2178px;height:56px;background:#f9f9fa;"></div><div class="b" style="left:0;top:238px;width:2178px;height:56px;background:#f9f9fa;"></div><div class="b" style="left:0;top:354px;width:2178px;height:56px;background:#f9f9fa;"></div><div class="b" style="left:0;top:120px;width:2178px;height:2px;background:#e4e6ec;"></div><div class="b" style="left:0;top:178px;width:2178px;height:2px;background:#e4e6ec;"></div><div class="b" style="left:0;top:236px;width:2178px;height:2px;background:#e4e6ec;"></div><div class="b" style="left:0;top:294px;width:2178px;height:2px;background:#e4e6ec;"></div><div class="b" style="left:0;top:352px;width:2178px;height:2px;background:#e4e6ec;"></div><div class="b" style="left:0;top:410px;width:2178px;height:2px;background:#e4e6ec;"></div><div class="b" style="left:2169.0px;top:0;width:8px;height:419px;background:#fff;border-left:2px solid #e4e6ec;"></div></div>
<span class="t" style="left:711.02px;top:1028.51px;font-size:24.5px;line-height:32px;letter-spacing:0.823px;color:#656d7e;-webkit-text-stroke:.95px #656d7e;">QUERY PLAN</span>
<svg class="i" style="left:885px;top:1030px" width="30" height="28" viewBox="0 0 30 28" fill="none" stroke="#dcdde3" stroke-width="2.600" stroke-linecap="round" stroke-linejoin="round"><path d="M8.500 3v21.500M3.500 19.500l5 5 5-5M15 4h12M15 10h8.500M15 16h5.500"/></svg>
<span class="t m" style="left:711.30px;top:1085.81px;font-size:28px;line-height:36px;color:#0a0a0a;">Sort (cost=2.73..2.75 rows=10 width=44)</span>
<span class="t m" style="left:711.30px;top:1143.81px;font-size:28px;line-height:36px;color:#0a0a0a;">Sort Key: (count(issue.creator_id)) DESC</span>
<span class="t m" style="left:711.30px;top:1201.81px;font-size:28px;line-height:36px;color:#0a0a0a;">-&gt; HashAggregate (cost=2.46..2.56 rows=10 width=44)</span>
<span class="t m" style="left:711.30px;top:1259.81px;font-size:28px;line-height:36px;color:#0a0a0a;">Group Key: issue.creator_id, principal.email</span>
<span class="t m" style="left:711.30px;top:1317.81px;font-size:28px;line-height:36px;color:#0a0a0a;">-&gt; Hash Join (cost=1.25..2.38 rows=10 width=36)</span>
<span class="t m" style="left:711.30px;top:1375.81px;font-size:28px;line-height:36px;color:#0a0a0a;">Hash Cond: (issue.creator_id = principal.id)</span>
<span class="t" style="left:684.19px;top:1437.51px;font-size:24.5px;line-height:32px;letter-spacing:0.208px;color:#73747f;">EXPLAIN -- Issues created by user SELECT issue.creator_id, principal.email, COUNT(issue.creator_id) AS amount FROM issue INNER JOIN principal ON i...</span>
<span class="t" style="left:2467.94px;top:1437.51px;font-size:24.5px;line-height:32px;letter-spacing:0.136px;color:#4f46e5;">Visualize Explain</span>
<span class="t" style="left:2671.05px;top:1437.51px;font-size:24.5px;line-height:32px;letter-spacing:0.381px;color:#73747f;">Query time: 2 ms</span>
</section>
<div aria-hidden="true">
<svg class="i" style="left:2400px;top:1320px" width="180" height="130" viewBox="2400 1320 180 130"><path d="M2409 1334.500C2410 1332.500 2412 1332.800 2413.500 1333.800L2526.500 1405.500L2534.500 1394L2558.500 1435.800L2511.500 1428L2518.500 1417.500L2410 1338.500C2408.500 1337.300 2408.300 1336 2409 1334.500Z" fill="#d63343" style="filter:drop-shadow(0 2px 2px rgba(0,0,0,.25))"/></svg>
<svg class="i" style="left:0;top:1453px" width="24" height="24" viewBox="0 0 24 24"><path d="M0 0V24H24A24 24 0 0 1 0 0Z" fill="#6e6e6e"/><path d="M0 0A24 24 0 0 0 24 24" fill="none" stroke="#0a0a0a" stroke-width="2.500"/></svg>
<svg class="i" style="left:2858px;top:1455px" width="22" height="22" viewBox="0 0 22 22"><path d="M22 0V22H0A22 22 0 0 0 22 0Z" fill="#6e6e6e"/><path d="M22 0A22 22 0 0 1 0 22" fill="none" stroke="#0a0a0a" stroke-width="2.500"/></svg>
</div>
</div>
</body>
</html>
